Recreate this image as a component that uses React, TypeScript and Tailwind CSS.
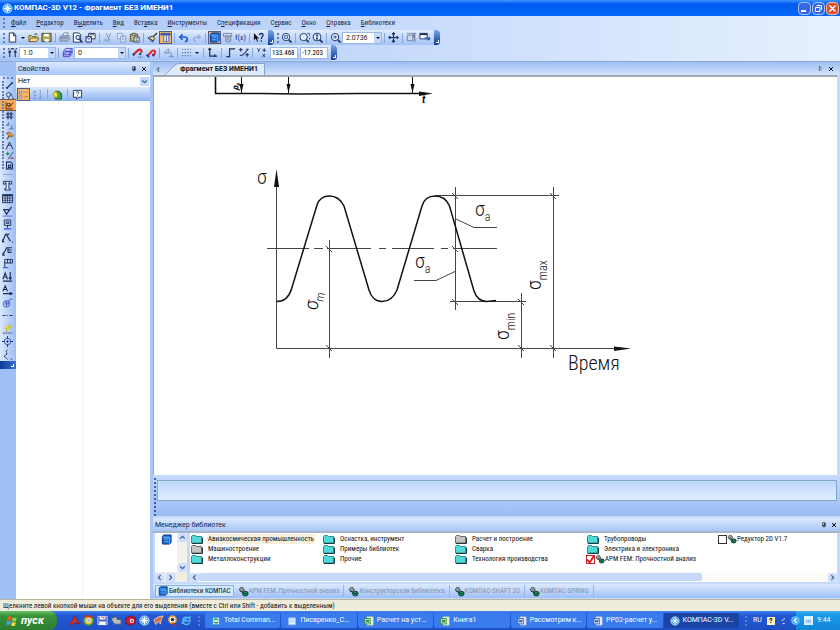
import type { ReactNode } from "react";

const INK = "#1c2f5c";

function Icon({ children, className = "size-[11px]" }: { children: ReactNode; className?: string }) {
  return (
    <svg viewBox="0 0 12 12" className={`shrink-0 ${className}`} fill="none" stroke={INK} strokeWidth="1">
      {children}
    </svg>
  );
}

const icons: Record<string, ReactNode> = {
  file: <path d="M2.500 1h5l2 2.500V11h-7zM7 1v3h2.500" fill="#fff" />,
  open: (
    <>
      <path d="M1 10V4h3l1 1h4v2" fill="#f3d25a" stroke="#6b5a1c" />
      <path d="M1 10.500l2.500-4H12l-2.500 4z" fill="#f7e08a" stroke="#6b5a1c" />
      <path d="M7 2.500c2-1 3 0 3.500 1" />
    </>
  ),
  save: (
    <>
      <path d="M1 1.500h10v9H1z" fill="#b9a75b" stroke="#3a3a2a" />
      <path d="M3.500 2h5v3h-5zM4 7.500h4.500v3H4z" fill="#fff" stroke="none" />
    </>
  ),
  print: (
    <>
      <path d="M1 5.500l2-1.500h8v4.500L9 10H1z" fill="#a9b4c9" stroke="#7485a5" />
      <path d="M4 4l1.500-3H10L9 4z" fill="#eef3fb" stroke="#7485a5" />
      <path d="M1.500 6.500h8" stroke="#66769a" />
    </>
  ),
  preview: (
    <>
      <path d="M1.500 1h6l2 2v8h-8z" fill="#fff" />
      <circle cx="6.500" cy="6" r="2.300" fill="#cfe2ff" />
      <path d="M8 8l3.500 3.500" strokeWidth="1.600" />
    </>
  ),
  send: (
    <>
      <path d="M4 1.500h7v6H4z" fill="#fff6d8" />
      <path d="M1 5h6v6H1z" fill="#d6e3f8" />
      <path d="M1.500 5l2.500 3 3-3M5 3h5" stroke="#3355a0" />
    </>
  ),
  cut: <path d="M3.500 1l3 7M8.500 1l-3 7M4.500 9a1.300 1.300 0 1 1-.5-1M8 10.500a1.300 1.300 0 1 1 0-2" stroke="#8093b5" />,
  copy: (
    <>
      <path d="M1.500 1.500H7v6H1.500z" fill="#dbe6f8" stroke="#8a9cc0" />
      <path d="M5 4.500h5.500V11H5zM6.500 6.500h2.500M6.500 8.500h2.500" fill="#dbe6f8" stroke="#8a9cc0" />
    </>
  ),
  paste: (
    <>
      <path d="M1.500 2.500h8V10h-8z" fill="#cbb56a" stroke="#55502c" />
      <path d="M3.500 1.500h4v2h-4z" fill="#ddd" stroke="#555" />
      <path d="M5.500 5.500H11V11H5.500zM7 7.500h2.500M7 9.500h2.500" fill="#fff" stroke="#33405c" />
    </>
  ),
  brush: (
    <>
      <path d="M11 1L7 5" stroke="#4a3a10" strokeWidth="1.500" />
      <path d="M1 6.500l5-2 2.500 2.500L6 11z" fill="#e3d894" />
      <path d="M3 7l3.500 2.500" />
    </>
  ),
  props: (
    <>
      <path d="M1 1.500h10v1.800H1z" fill="#3e6fd0" stroke="#2c519e" />
      <path d="M4 3.500h5.500v7H4z" fill="#dce6fa" stroke="#5573b5" />
      <path d="M7 4v6.500" stroke="#5573b5" />
    </>
  ),
  undo: <path d="M3 5.500h4.500c3.500 0 3.500 4.500 0 5M5 2.500L2 5.500l3 3" stroke="#1f5fd6" strokeWidth="1.800" />,
  redo: <path d="M9 5.500H5.500C2 5.500 2 9.500 5 10M7.500 3L10 5.500 7.500 8" stroke="#93aad6" strokeWidth="1.400" />,
  book: (
    <>
      <path d="M1.500 2.500l1.500-1.500h8v8.500L9.500 11h-8z" fill="#1767cf" stroke="#0a2f7a" />
      <path d="M2 3.500h7.500V11M3.500 5.500h4.500M3.500 8.500h4.500" stroke="#6fc1ff" />
    </>
  ),
  vars: (
    <>
      <path d="M1.500 1.500h9v3h-9z" fill="#d3dcec" stroke="#6f7fa0" />
      <path d="M4 4.500h5.500V10L7 11 4 9.500z" fill="#b4c0d6" stroke="#6f7fa0" />
      <path d="M6.500 5v4" stroke="#6f7fa0" />
    </>
  ),
  help: (
    <>
      <path d="M1 1v8l2-1.800L4.500 10.500l1-.5L4.300 7H6.500z" fill="#111" stroke="none" />
      <path d="M7 3.500C7 1 11 1 11 3.500 11 5.500 9 5.200 9 7.500M9 9v1.600" stroke="#10256b" strokeWidth="1.400" />
    </>
  ),
  zoomSel: (
    <>
      <circle cx="5.500" cy="5.500" r="4" fill="#e4efff" />
      <path d="M4 4h3v3H4z" stroke="#3355a0" />
      <path d="M8.500 8.500l3 3" strokeWidth="1.800" />
    </>
  ),
  zoomAll: (
    <>
      <circle cx="5" cy="5.500" r="4" fill="#e4efff" />
      <path d="M8 8.500l2.500 2.500" strokeWidth="1.700" />
      <path d="M9 1.500h2.500V4M11.500 6v2" stroke="#3355a0" />
    </>
  ),
  zoomFit: (
    <>
      <circle cx="5.500" cy="5.500" r="4.300" fill="#e4efff" />
      <path d="M5.500 2.500v6M4.200 3.500h2.600M4.200 7.500h2.600" />
      <path d="M8.500 8.500l3 3" strokeWidth="1.800" />
    </>
  ),
  zoomIn: (
    <>
      <circle cx="5.500" cy="5.500" r="4" fill="#e4efff" />
      <path d="M5.500 3.500v4M3.500 5.500h4" stroke="#2346a5" />
      <path d="M8.500 8.500l3 3" strokeWidth="1.800" />
    </>
  ),
  move: <path d="M6 1v10M1 6h10M4.500 2.500L6 1l1.500 1.500M4.500 9.500L6 11l1.500-1.500M2.500 4.500L1 6l1.500 1.500M9.500 4.500L11 6 9.500 7.500" strokeWidth="1.300" />,
  refresh: (
    <>
      <path d="M1 1.500h10M1.500 3.500h6v6h-6z" fill="#cfd9ea" stroke="#75849f" />
      <path d="M9.500 2v9M8 2v4" stroke="#56658a" />
    </>
  ),
  redraw: (
    <>
      <path d="M1 1.500h8v6H1z" fill="#fff" />
      <path d="M1 2.500h8" strokeWidth="1.800" />
      <path d="M6 8c1-2.500 4-2.500 5 0M11.500 5.500v2.800H9" stroke="#1f5fd6" strokeWidth="1.300" />
    </>
  ),
  step: <path d="M3 4v7M9 4v7M1.500 6L3 4l1.500 2M7.500 6L9 4l1.500 2M1 2h1.500M4 2h4M9.500 2H11" strokeWidth="1.200" />,
  layers: (
    <>
      <path d="M1 8.500L4 5h7L8 8.500z" fill="#9db5ff" stroke="#4b44c8" />
      <path d="M4 1.500h7V7L8 10.500H1.500V5z" stroke="#4b44c8" />
      <path d="M2.500 4.500h6v5.500M8.500 4.500L11 1.500" stroke="#4b44c8" />
    </>
  ),
  magnet: (
    <>
      <path d="M1.500 8.500l5-5c3-2.500 5 1 3 3" stroke="#d0231c" strokeWidth="2.200" />
      <path d="M1 9l1.500-1.500M8 8.500L9.500 7" stroke="#173a9a" strokeWidth="2.400" />
      <path d="M7 11h4.500" strokeDasharray="1 1" />
    </>
  ),
  magnetOff: (
    <>
      <path d="M3 9.500l4-4.500c3-3 5.500 0 3 3L8.500 9.500" stroke="#e02a20" strokeWidth="2.200" />
      <path d="M1.500 8.500l3 2.500M8 8l2 2" stroke="#173a9a" strokeWidth="1.700" />
    </>
  ),
  snap: <path d="M1.500 6.500L6 2l1 4.500zM6.500 10.500h5M9 6v4.500" stroke="#7385a8" />,
  grid: <path d="M1 2.500h10M1 6h10M1 9.500h10" stroke="#4f5f83" strokeDasharray="1.500 1.500" />,
  ortho: <path d="M3 1.500v8.500h8M1.500 3L3 1.500 4.500 3M8.500 8v3" strokeWidth="1.300" />,
  round: <path d="M1.500 10.500H5V2h6" strokeWidth="1.300" />,
  points: <path d="M1 3h4M3 1v4M5 9L10.500 3M2 9h3M8 8.500h4M10 6.500v4M9 2.500h2.500" strokeWidth="1.200" />,
  xy: <path d="M1.500 1.500L3 3.500l1.500-2M3 3.500v2M7 3.500h4M9 1.500v4M7 7.500l3 3.500M10 7.500L7 11" />,
  segment: <path d="M2 10l8-8M1.500 8.500l2 2M8.500 1.500l2 2" strokeWidth="1.500" />,
  shapes: (
    <>
      <circle cx="5" cy="5" r="3" />
      <path d="M4 11l4-7 3.500 7z" fill="#cfe0fb" />
    </>
  ),
  dims: (
    <>
      <path d="M1.500 1.500v9h9" stroke="#84310c" strokeWidth="1.500" />
      <path d="M3 3.500h4v3H3zM4 8l3-1 4-5" stroke="#332014" />
    </>
  ),
  mesh: <path d="M1 4h10M1 8h10M4 1v10M8 1v10" strokeWidth="1.600" />,
  angle: <path d="M2 6l3-4v4zM5 10.500h6M9 5v5.500" stroke="#4c5f8c" />,
  hammer: (
    <>
      <path d="M2 3l4-1.500 5 4.500-2 2-3.500-2z" fill="#e8a13a" stroke="#6d4213" />
      <path d="M6 6.500L2.500 11" stroke="#6d4213" strokeWidth="1.600" />
    </>
  ),
  measure: (
    <>
      <path d="M1.500 11L6 1.500l4.500 9.500M3.500 7C5 5 7 5 8.500 7" strokeWidth="1.300" />
      <path d="M1 10.500h2" stroke="#c33" />
    </>
  ),
  plusMinus: (
    <>
      <path d="M1 3.500h5M3.500 1v5" stroke="#17994a" strokeWidth="1.600" />
      <path d="M11 1L4 11" />
      <path d="M7 9.500h4.500" stroke="#c8281e" strokeWidth="1.600" />
    </>
  ),
  sheet: <path d="M2 1.500h5.500L10 4v6.500H2zM4.500 5.500h3.500v3H4.500z" fill="#d9e2f2" strokeWidth="1.400" />,
  text: <path d="M1.500 4.500v-3h9v3h-2V3H7.500v6.500H9V11H3V9.500h1.500V3H3.500v1.500z" fill="#e9f0fc" />,
  table: (
    <>
      <path d="M.5 2h11v8.500H.5z" fill="#c9d3e6" />
      <path d="M.5 2.500h11" strokeWidth="2" />
      <path d="M.5 5.500h11M.5 8h11M3.500 3v7M6 3v7M8.500 3v7" strokeWidth=".8" />
    </>
  ),
  rough: (
    <>
      <path d="M2 4h6L5 9zM5 9l5.500-8" strokeWidth="1.300" />
      <path d="M1 11h10" stroke="#4068f0" />
    </>
  ),
  base: (
    <>
      <path d="M2.500 1h7v6h-7zM6 7v3M4.500 3h3v2h-3z" />
      <path d="M2 10.800h8" stroke="#4068f0" strokeWidth="1.600" />
    </>
  ),
  leader: <path d="M.5 10.500L4 2.500h4M5 3l4 7M.5 8v2.500h2M11 11h1" strokeWidth="1.300" />,
  mark: <path d="M1 11L5 3h6M6.500 5.500h4M6.500 8h4M6.500 3v5M1 8.500V11h2" strokeWidth="1.200" />,
  tolerance: (
    <>
      <path d="M3 1.500h8.500v4H3zM6 1.500v4M9 1.500v4M3 5v5" />
      <path d="M1 10.500h6" stroke="#4068f0" strokeWidth="1.500" />
    </>
  ),
  section: <path d="M1 9L3.500 2 6 9M2 6.500h3M9 1v8M7.500 7L9 9l1.500-2M1 11h10" strokeWidth="1.200" />,
  view: <path d="M1 8l2.500-6L6 8M2 6h3M1 10.500h9M8.500 9l2.500 1.500L8.500 12" strokeWidth="1.200" />,
  detail: (
    <>
      <circle cx="5" cy="7.500" r="3.500" stroke="#3a50c8" />
      <path d="M3 7.500h4.500v-3C7.500 3 9 2 11 2.500M5 5.500V10M3 5.500h3" stroke="#3a50c8" />
    </>
  ),
  axis: <path d="M.5 6h3.500M5.500 6h1M8 6h3.500" />,
  bolt: (
    <>
      <path d="M9 .5L3 6h3l-2 4 6-5.500H7z" fill="#ffe82a" stroke="#c5a200" strokeWidth=".6" />
      <path d="M1 11h10" strokeDasharray="2 1" />
    </>
  ),
  target: (
    <>
      <circle cx="6" cy="6" r="3.500" stroke="#3a50c8" />
      <path d="M6 0v3M6 9v3M0 6h3M9 6h3" />
      <circle cx="6" cy="6" r=".8" fill={INK} />
    </>
  ),
  wave: <path d="M6 1C2 3 8 5 4 6.500S6 10 6 11.500M9.500 11h1.500" />,
  categories: (
    <>
      <path d="M1.500 2.500h2.500v2.500H1.500zM1.500 7.500h2.500V10H1.500z" fill="#fff" stroke="#5f7ec4" />
      <path d="M6 3.500h5M6 8.500h5" stroke="#c98636" />
    </>
  ),
  sort: <path d="M1.500 5L3 1.500 4.500 5M1.500 7h3l-3 3.500h3M9 1v9.500M7.500 9L9 10.500 10.500 9" stroke="#8295b9" />,
  filter: (
    <>
      <path d="M3.500 2.500h4L10.500 5v6h-7z" fill="#3fa34d" stroke="#1c5c2a" />
      <path d="M1 6l3.500-4 2 5-2 3z" fill="#f2e92c" stroke="#9a951a" />
    </>
  ),
  ask: <path d="M1.500 1.500h9v7.500H7l-2 2V9H1.500zM4.500 4c0-1.500 3-1.500 3 0 0 1-1.500 1-1.500 2M6 7v1" fill="#fff" />,
  gears: (
    <>
      <circle cx="4" cy="4" r="2.500" fill="#8f9a98" stroke="#222" strokeDasharray="1.500 .7" />
      <ellipse cx="8" cy="8.300" rx="3" ry="2.500" fill="#159567" stroke="#0b2d22" />
      <path d="M3 5l3 3M6.500 8.300h3" stroke="#0b2d22" />
    </>
  ),
  pin: <path d="M3.500 1.500h5v6h-5zM7 2v5M2 7.500h8M6 8v3" stroke="#111" strokeWidth="1.300" />,
  close: <path d="M2 2l8 8M10 2l-8 8" stroke="#111" strokeWidth="2" />,
  left: <path d="M8 2L4 6l4 4z" />,
  right: <path d="M4 2l4 4-4 4z" />,
  logo: (
    <>
      <circle cx="6" cy="6" r="5" fill="#4fa4ee" stroke="#bfe2ff" />
      <path d="M3.500 3.500l5 5M8.500 3.500l-5 5M6 2v8M2 6h8" stroke="#fff" strokeWidth="1.100" />
    </>
  ),
  red: <path d="M6 1l2 4 3.500 5-3-1L6 8 3 10.500.500 9.500 4 6z" fill="#e33327" stroke="#8e1410" />,
  chrome: (
    <>
      <circle cx="6" cy="6" r="5" fill="#e7b72c" stroke="#4b9a35" strokeWidth="1.500" />
      <path d="M2 2.500C4 .5 8 .5 10 3" stroke="#d93525" strokeWidth="2" />
      <circle cx="6" cy="6" r="2" fill="#6db2ef" stroke="#fff" />
    </>
  ),
  floppy: (
    <>
      <path d="M1 1.500h10v9H1z" fill="#4f64bd" stroke="#c7d6fb" />
      <path d="M3 2h6v3H3zM2.500 7h7v3.500h-7z" fill="#fff" stroke="none" />
      <path d="M5 3h3" stroke="#d22" />
    </>
  ),
  drive: <path d="M1 3l5-1 1 3h4v5H4L1 6z" fill="#b8bec6" stroke="#51585f" />,
  cube: (
    <>
      <path d="M1 3l5-2 5 2v6l-5 2.500L1 9z" fill="#c8203a" stroke="#7b0c1c" />
      <path d="M6 5h3v3H6z" stroke="#fff" />
    </>
  ),
  horse: <path d="M1 5l5-3 5-1-2 4-1 5-2-3-3 3.500z" fill="#cf7154" stroke="#eec3a6" />,
  round2: (
    <>
      <circle cx="6" cy="5" r="4" fill="#fff" stroke="#e2a221" strokeWidth="1.600" />
      <circle cx="6" cy="5" r="1.500" fill="#111" />
      <path d="M6 9l4 2" stroke="#d02d20" strokeWidth="2" />
    </>
  ),
  ie: <path d="M2.500 6.500h7.500C10 1 2 1 2 6.500c0 4.500 6 5 7.500 1.800M1 10C2 6 7 2 11 2" stroke="#56b7f4" strokeWidth="1.500" />,
  word: (
    <>
      <path d="M3.500 1h7.500v10H3.500z" fill="#fff" stroke="#8fa9de" />
      <path d="M1 3h7v6.500H1z" fill="#dbe6ff" stroke="#2b56b3" />
      <path d="M2.500 4.500l1 3 1-2.500 1 2.500 1-3" stroke="#1c3f94" />
    </>
  ),
  excel: (
    <>
      <path d="M3.500 1h7.500v10H3.500z" fill="#fff" stroke="#9bc79b" />
      <path d="M1 3h7v6.500H1z" fill="#e2f7dc" stroke="#2c8a36" />
      <path d="M2.500 4.500l4 3.500M6.500 4.500l-4 3.500" stroke="#1d7a28" strokeWidth="1.300" />
    </>
  ),
  commander: (
    <>
      <path d="M2 1.500h8v9H2z" fill="#d9f4ff" stroke="#2d86c9" />
      <path d="M4 5c0-2 3-2 4 0M8 7c0 2-3 2-4 0" stroke="#188a3c" strokeWidth="1.500" />
    </>
  ),
  notes: <path d="M2 2.500h8v8H2zM3.500 5h5M3.500 7h5M3.500 1v2M6 1v2M8.500 1v2" fill="#e7f3ff" stroke="#9fc6ef" />,
};

function Tool({ name, on = false, label }: { name: string; on?: boolean; label?: string }) {
  return (
    <button
      aria-label={label ?? name}
      className={
        on
          ? "flex h-[13px] w-[13px] shrink-0 items-center justify-center border border-[#4b5b8f] bg-[#f7b568]"
          : "flex h-[13px] w-[13px] shrink-0 items-center justify-center hover:bg-[#ffe6b5]"
      }
    >
      <Icon>{icons[name]}</Icon>
    </button>
  );
}

function Sep() {
  return <span className="mx-[2px] h-[10px] w-px shrink-0 bg-[#86a9e0]" />;
}

function Grip() {
  return <span className="mr-px ml-[3px] h-[10px] w-0 shrink-0 border-l-2 border-dotted border-[#5c7fc4]" />;
}

function Down() {
  return <span className="mx-[2px] h-0 w-0 shrink-0 border-x-2 border-t-2 border-x-transparent border-t-[#111]" />;
}

function Cap() {
  return (
    <span className="ml-[3px] flex h-[15px] w-[6px] shrink-0 items-end justify-center rounded-r-sm bg-linear-to-b from-[#7ba4ea] to-[#0b3a97] pb-[2px]">
      <span className="h-[3px] w-[3px] border-r border-b border-white" />
    </span>
  );
}

function Combo({ value, label, width }: { value: string; label: string; width: string }) {
  return (
    <span className={`flex h-[12px] shrink-0 items-center border border-[#9db9e8] bg-white ${width}`}>
      <select aria-label={label} className="h-full min-w-0 flex-1 appearance-none bg-white pl-[3px] font-['Roboto'] text-[7px] leading-[10px] text-[#222]">
        <option>{value}</option>
      </select>
      <span className="flex h-full w-[7px] items-center justify-center bg-[#c3d8f8]">
        <Down />
      </span>
    </span>
  );
}

const menu: [string, string, string][] = [
  ["", "Ф", "айл"],
  ["", "Р", "едактор"],
  ["В", "ы", "делить"],
  ["", "В", "ид"],
  ["Вст", "а", "вка"],
  ["", "И", "нструменты"],
  ["С", "п", "ецификация"],
  ["С", "е", "рвис"],
  ["", "О", "кно"],
  ["", "С", "правка"],
  ["", "Б", "иблиотеки"],
];

function TitleBar() {
  return (
    <header className="flex h-4 items-center bg-linear-to-b from-[#3f95ff] via-[#0058ee] via-25% to-[#0567fb] pr-px pl-[2px]">
      <Icon>{icons.logo}</Icon>
      <h1 className="flex-1 truncate font-['Roboto'] text-[8px] leading-[12px] font-bold text-white">
        <span className="ml-px">КОМПАС-3D V12 - Фрагмент БЕЗ ИМЕНИ1</span>
      </h1>
      <div className="flex gap-px">
        <button aria-label="Свернуть" className="flex h-[13px] w-[13px] items-end rounded-sm border border-[#a9c5ff] bg-[#3568e0] p-[2px]">
          <span className="h-[2px] w-[5px] bg-white" />
        </button>
        <button aria-label="Восстановить" className="flex h-[13px] w-[13px] items-center justify-center rounded-sm border border-[#a9c5ff] bg-[#3568e0]">
          <svg viewBox="0 0 9 9" className="size-[9px]" fill="none" stroke="#fff">
            <path d="M3 2.500v-1h4.500v4h-1M1.500 3.500H6v4H1.500z" />
          </svg>
        </button>
        <button aria-label="Закрыть" className="flex h-[13px] w-[13px] items-center justify-center rounded-sm border border-[#f5b9a5] bg-[#de4f2b]">
          <svg viewBox="0 0 9 9" className="size-[9px]" stroke="#fff" strokeWidth="1.500">
            <path d="M1.500 1.500l6 6M7.500 1.500l-6 6" />
          </svg>
        </button>
      </div>
    </header>
  );
}

function Toolbars() {
  const bar = "flex h-[15px] items-center bg-linear-to-b from-[#e2edfe] to-[#a3c2f5]";
  return (
    <div className="bg-linear-to-r from-[#a9c6f7] via-[#cfe0fc] via-60% to-[#e6f1fe]">
      <nav className="flex h-[14px] items-center">
        <Grip />
        {menu.map(([a, key, b]) => (
          <button key={key + b} className="px-[5px] text-[7px] leading-[12px] text-[#1a2748]">
            {a}
            <u>{key}</u>
            {b}
          </button>
        ))}
      </nav>
      <div className="flex">
        <div className={bar}>
          <Grip />
          <Tool name="file" />
          <Down />
          <Tool name="open" />
          <Tool name="save" />
          <Sep />
          <Tool name="print" />
          <Tool name="preview" />
          <Tool name="send" />
          <Sep />
          <Tool name="cut" />
          <Tool name="copy" />
          <Tool name="paste" />
          <Sep />
          <Tool name="brush" />
          <Tool name="props" on />
          <Sep />
          <Tool name="undo" />
          <Tool name="redo" />
          <Sep />
          <Tool name="book" on />
          <Tool name="vars" />
          <button className="w-[13px] text-center text-[8px] leading-[12px] text-[#1b2f8a]">f(x)</button>
          <Sep />
          <Tool name="help" />
          <Cap />
        </div>
        <div className={bar}>
          <Grip />
          <Tool name="zoomSel" />
          <Sep />
          <Tool name="zoomAll" />
          <Tool name="zoomFit" />
          <Sep />
          <Tool name="zoomIn" />
          <Combo value="2.0736" label="Масштаб" width="w-[40px]" />
          <Sep />
          <Tool name="move" />
          <Sep />
          <Tool name="refresh" />
          <Tool name="redraw" />
          <Cap />
        </div>
      </div>
      <div className="flex pb-px">
        <div className={bar}>
          <Grip />
          <Tool name="step" />
          <Combo value="1.0" label="Шаг курсора" width="w-[37px]" />
          <Sep />
          <Tool name="layers" />
          <Combo value="0" label="Слой" width="w-[52px]" />
          <Sep />
          <Tool name="magnet" />
          <Tool name="magnetOff" />
          <Sep />
          <Tool name="snap" />
          <Sep />
          <Tool name="grid" />
          <Down />
          <Sep />
          <Tool name="ortho" />
          <Sep />
          <Tool name="round" />
          <Tool name="points" />
          <Sep />
          <Tool name="xy" />
          <input aria-label="X" defaultValue="133.468" className="ml-[2px] h-[12px] w-[28px] border border-[#9db9e8] bg-white px-px text-[7px]" />
          <input aria-label="Y" defaultValue="-17.203" className="ml-[2px] h-[12px] w-[28px] border border-[#9db9e8] bg-white px-px text-[7px]" />
          <Cap />
        </div>
      </div>
    </div>
  );
}

const modes = ["segment", "shapes", "dims", "mesh", "angle", "hammer", "measure", "plusMinus", "sheet"];
const marks = ["text", "table", "rough", "base", "leader", "mark", "tolerance", "section", "view", "detail", "axis", "bolt", "target", "wave"];

function CompactPanel() {
  return (
    <aside className="w-4 shrink-0 bg-[#9fbff5] pt-[14px]">
      <div className="flex flex-col bg-linear-to-r from-[#dbe8fd] to-[#9dbdf3]">
        <span className="mx-[3px] mt-px mb-px border-t-2 border-dotted border-[#5c7fc4]" />
        {modes.map((name) => (
          <button
            key={name}
            aria-label={name}
            className={name === "dims" ? "flex h-[10px] items-center bg-[#f5ad57] outline outline-[#6e5a48]" : "flex h-[10px] items-center"}
          >
            <span className="mr-px ml-[2px] h-2 w-0 border-l-2 border-dotted border-[#5c7fc4]" />
            <Icon className="size-[9px]">{icons[name]}</Icon>
          </button>
        ))}
        <span className="mx-[3px] my-[4px] h-px bg-[#86a9e0]" />
        {marks.map((name) => (
          <button key={name} aria-label={name} className="flex h-[13px] items-center pl-[2px]">
            <Icon>{icons[name]}</Icon>
          </button>
        ))}
        <span className="flex h-[8px] items-center justify-end bg-linear-to-r from-[#0b3a97] to-[#3e72cf] pr-[2px]">
          <span className="h-[3px] w-[3px] border-r border-b border-white" />
        </span>
      </div>
    </aside>
  );
}

function PanelHeader({ title }: { title: string }) {
  return (
    <div className="flex h-[13px] shrink-0 items-center gap-[4px] bg-linear-to-b from-[#dce9fe] to-[#a8c6f6] pr-[3px] pl-[2px]">
      <h2 className="flex-1 font-['Roboto'] text-[7px] leading-[12px] text-[#14224a]">{title}</h2>
      <button aria-label="Закрепить">
        <Icon className="size-[6px]">{icons.pin}</Icon>
      </button>
      <button aria-label="Закрыть панель">
        <Icon className="size-[6px]">{icons.close}</Icon>
      </button>
    </div>
  );
}

function Properties() {
  return (
    <section className="flex w-[134px] shrink-0 flex-col bg-white">
      <PanelHeader title="Свойства" />
      <div className="flex h-[12px] items-center">
        <select aria-label="Объект" className="h-full flex-1 appearance-none pl-[2px] font-['Roboto'] text-[7px] leading-[12px] text-black">
          <option>Нет</option>
        </select>
        <span className="mr-px flex size-[9px] items-center justify-center bg-[#c6d8fc]">
          <Icon className="size-[7px]">
            <path d="M2 4l4 4 4-4" stroke="#3d5a96" strokeWidth="2" />
          </Icon>
        </span>
      </div>
      <div className="flex h-[14px] items-center gap-px bg-linear-to-b from-[#dde9fd] to-[#8fb4f1] pl-px">
        <Tool name="categories" on />
        <Tool name="sort" />
        <Sep />
        <Tool name="filter" />
        <Sep />
        <Tool name="ask" />
      </div>
      <div className="flex flex-1">
        <div className="w-1/2 border-r border-[#f6f5f0]" />
      </div>
    </section>
  );
}

function Tick({ x, y }: { x: number; y: number }) {
  return <path d={`M${x - 3} ${y - 3}l6 6`} />;
}

function Drawing() {
  return (
    <svg viewBox="154 77 682 398" className="block h-[398px] w-[682px]" fill="none" stroke="#444" strokeWidth="1">
      <g stroke="#111">
        <path d="M215.500 76v18M215 93.500h45l40 .5 60-.5h62" strokeWidth="1.600" />
        <path d="M241.500 76v17M288.500 76v17M412.500 76v17" />
        <path d="M239.500 84l2 9 2-9zM286.500 84l2 9 2-9zM410.500 84l2 9 2-9zM419 91.500l14 2-14 2.500z" fill="#111" stroke="none" />
      </g>
      <path d="M276.500 175v173.500H618M329.500 240v118M455.500 187v123M553.500 187v171M521.500 293v65M435 195.500h124M450 301.500h76" />
      <path d="M267 248.500h42M314 248.500h9M327 248.500h44M379 248.500h7M392 248.500h42M441 248.500h7M453 248.500h44" />
      <path d="M455 218.500l19 9h23M414 280.500h22l19-9" />
      <path d="M276.500 169l-2.500 18h5zM631 348.500l-17-2v4.500z" fill="#111" stroke="none" />
      <path
        d="M277 301.500C284 301.500 289 297 291.500 289L317 205C319 199 324 196 329.500 196C337 196 341 200 344 206L369 290C371 297 376 301.500 382 301.500C389 301.500 394 297 397 290L422 206C424 199 429 196 435 196C442 196 447 200 449.500 206L474 291C476 297 480 301.500 487 301.500L496 300.500"
        stroke="#111"
        strokeWidth="1.500"
      />
      <Tick x={329} y={249} />
      <Tick x={329} y={348} />
      <Tick x={455} y={196} />
      <Tick x={455} y={249} />
      <Tick x={455} y={302} />
      <Tick x={553} y={196} />
      <Tick x={553} y={348} />
      <Tick x={521} y={302} />
      <Tick x={521} y={348} />
      <g fill="#111" stroke="none" className="font-['Roboto_Condensed','Roboto',sans-serif] font-light">
        <text x="257" y="184" fontSize="20">σ</text>
        <text x="475" y="216" fontSize="20">σ<tspan fontSize="12" dy="5">a</tspan></text>
        <text x="415" y="268" fontSize="20">σ<tspan fontSize="12" dy="5">a</tspan></text>
        <text transform="translate(317 311) rotate(-78)" fontSize="20">σ<tspan fontSize="12" dy="4">m</tspan></text>
        <text transform="translate(509 340) rotate(-90)" fontSize="20">σ<tspan fontSize="12" dy="6">min</tspan></text>
        <text transform="translate(541 290) rotate(-90)" fontSize="20">σ<tspan fontSize="12" dy="6">max</tspan></text>
        <text x="568" y="370" fontSize="20">Время</text>
        <text x="422" y="103" fontSize="11" fontStyle="italic" fontWeight="bold">t</text>
        <text transform="translate(238 90) rotate(-80)" fontSize="9" fontStyle="italic" fontWeight="bold">
          p<tspan fontSize="6" dy="1">a</tspan>
        </text>
      </g>
    </svg>
  );
}

function Folder({ gray = false }: { gray?: boolean }) {
  return (
    <svg viewBox="0 0 12 9" className="h-[9px] w-[12px] shrink-0" fill={gray ? "#c4c4c4" : "#4fdcd8"} stroke={gray ? "#6b6b6b" : "#2b8d93"}>
      <path d="M.5 1.500l1-1h3l1 1h5v6.500H.5z" />
      <path d="M1 8.500h10.500V2.500" fill="none" stroke="#1d3b3d" />
    </svg>
  );
}

type Entry = { title: string; kind?: "gray" | "app"; checked?: boolean; active?: boolean };

const columns: Entry[][] = [
  [{ title: "Авиакосмическая промышленность", active: true }, { title: "Машиностроение", kind: "gray" }, { title: "Металлоконструкции" }],
  [{ title: "Оснастка, инструмент" }, { title: "Примеры библиотек" }, { title: "Прочие" }],
  [{ title: "Расчет и построение", kind: "gray" }, { title: "Сварка" }, { title: "Технология производства" }],
  [{ title: "Трубопроводы" }, { title: "Электрика и электроника" }, { title: "APM FEM: Прочностной анализ", kind: "app", checked: true }],
  [{ title: "Редуктор 2D V1.7", kind: "app" }],
];

function LibraryItem({ item }: { item: Entry }) {
  if (item.kind === "app") {
    return (
      <label className="-ml-px flex h-[10px] items-center whitespace-nowrap">
        <input
          type="checkbox"
          defaultChecked={item.checked}
          className="peer size-[9px] shrink-0 appearance-none border border-[#333] bg-white checked:border-[#c22]"
        />
        <svg viewBox="0 0 9 9" className="-ml-[9px] hidden size-[9px] shrink-0 peer-checked:block" fill="none" stroke="#d01818" strokeWidth="1.800">
          <path d="M1 4.500l2.500 3L8 1" />
        </svg>
        <Icon className="size-[10px]">{icons.gears}</Icon>
        {item.title}
      </label>
    );
  }
  return (
    <button className="flex h-[10px] items-center gap-[4px] whitespace-nowrap">
      <Folder gray={item.kind === "gray"} />
      <span className={item.active ? "bg-[#f6f0dc] px-px" : "px-px"}>{item.title}</span>
    </button>
  );
}

function Arrow({ d, label }: { d: string; label: string }) {
  return (
    <button aria-label={label} className="flex size-[9px] shrink-0 items-center justify-center rounded-[2px] bg-[#cfdefd]">
      <Icon className="size-[7px]">
        <path d={d} stroke="#3d5a96" strokeWidth="2" />
      </Icon>
    </button>
  );
}

const tabs = ["APM FEM: Прочностной анализ", "Конструкторская библиотека", "КОМПАС-SHAFT 2D", "КОМПАС-SPRING"];

function LibraryManager() {
  return (
    <section className="flex shrink-0 flex-col bg-[#c5d9fa] pb-px">
      <PanelHeader title="Менеджер библиотек" />
      <div className="flex h-[53px] gap-[3px] border-t-2 border-[#a8b6cc] pr-[3px] pb-[2px] pl-[2px] text-[7px] leading-[10px] text-[#111]">
        <div className="flex w-[32px] shrink-0 flex-col bg-white">
          <div className="flex flex-1">
            <div className="flex flex-1 justify-center pt-px">
              <Icon>{icons.book}</Icon>
            </div>
            <div className="flex w-[10px] flex-col items-center justify-between bg-[#f3f2ea]">
              <Arrow d="M2 8l4-4 4 4" label="Вверх" />
              <Arrow d="M2 4l4 4 4-4" label="Вниз" />
            </div>
          </div>
          <div className="flex h-[10px] items-center gap-[2px] bg-[#f0eee2]">
            <Arrow d="M8 2L4 6l4 4" label="Влево" />
            <Arrow d="M4 2l4 4-4 4" label="Вправо" />
          </div>
        </div>
        <div className="flex min-w-0 flex-1 flex-col bg-white">
          <div className="flex min-h-0 flex-1 pt-px pl-px">
            {columns.map((column) => (
              <div key={column[0].title} className="w-[132px] shrink-0">
                {column.map((item) => (
                  <LibraryItem key={item.title} item={item} />
                ))}
              </div>
            ))}
          </div>
          <div className="flex h-[10px] items-center bg-[#fbfbf7]">
            <Arrow d="M8 2L4 6l4 4" label="Назад" />
            <div className="flex-1">
              <div className="h-[8px] w-4/5 rounded-[2px] bg-[#c7d8fc]" />
            </div>
            <Arrow d="M4 2l4 4-4 4" label="Вперёд" />
          </div>
        </div>
      </div>
      <div className="flex h-[14px] items-center bg-linear-to-b from-[#dce9fe] to-[#9fc0f5] pl-[2px] text-[7px] leading-[12px]">
        <button className="flex h-[12px] items-center gap-px border border-[#8eb1ea] bg-[#cfeafd] px-[2px] text-[#111]">
          <Icon className="size-[10px]">{icons.book}</Icon>
          Библиотеки КОМПАС
        </button>
        {tabs.map((tab) => (
          <button key={tab} className="flex items-center border-r border-[#9bb4dc] px-[4px] text-[#8595b0]">
            <Icon>{icons.gears}</Icon>
            {tab}
          </button>
        ))}
      </div>
    </section>
  );
}

function Workspace() {
  return (
    <main className="flex min-w-0 flex-1 flex-col bg-[#c5d9fa]">
      <div className="flex h-[13px] shrink-0 items-end bg-linear-to-b from-[#9dbdf2] to-[#d5e4fc] pr-[6px]">
        <button aria-label="Предыдущая вкладка" className="mb-[2px] ml-px">
          <Icon className="size-[7px]">{icons.left}</Icon>
        </button>
        <div className="flex flex-1">
          <svg viewBox="0 0 16 12" className="ml-[3px] h-[12px] w-[16px]" fill="#dfeafd" stroke="#86a5d8">
            <path d="M0 12.500L10 3Q12 .5 16 .5V12.500" stroke="none" />
            <path d="M0 12.500L10 3Q12 .5 16 .5" fill="none" />
          </svg>
          <button className="h-[12px] border-t border-r border-[#86a5d8] bg-[#dfeafd] pr-[6px] font-['Roboto'] text-[7px] leading-[11px] font-bold text-[#111]">
            Фрагмент БЕЗ ИМЕНИ1
          </button>
        </div>
        <div className="mb-[3px] flex gap-[4px]">
          <button aria-label="Следующая вкладка">
            <Icon className="size-[7px]">{icons.right}</Icon>
          </button>
          <button aria-label="Закрыть документ">
            <Icon className="size-[6px]">{icons.close}</Icon>
          </button>
        </div>
      </div>
      <div className="mr-[3px] flex-1 overflow-hidden border-t-2 border-l border-[#a3a8b0] bg-white">
        <Drawing />
      </div>
      <div className="mt-[3px] mb-[2px] flex h-[38px] shrink-0 bg-linear-to-b from-[#c3d7fa] to-[#9bbcf3] pr-[3px]">
        <span className="mx-px w-0 border-l-2 border-dotted border-[#3c5ea8]" />
        <div className="mt-[2px] h-[21px] flex-1 border border-[#7fa9c4] bg-linear-to-b from-[#bfd7fc] to-[#dfecff]" />
      </div>
      <LibraryManager />
    </main>
  );
}

const tasks = [
  { title: "Total Comman...", icon: "commander" },
  { title: "Писаренко_С...", icon: "notes" },
  { title: "Расчет на уст...", icon: "excel" },
  { title: "Книга1", icon: "excel" },
  { title: "Рассмотрим к...", icon: "word" },
  { title: "РР02-расчет у...", icon: "word" },
  { title: "КОМПАС-3D V...", icon: "logo" },
];
const quick = ["red", "chrome", "floppy", "drive", "cube", "logo", "horse", "round2", "ie"];

function Taskbar() {
  return (
    <footer className="flex h-[19px] shrink-0 items-center bg-linear-to-b from-[#3f87f5] via-[#2459d6] via-20% to-[#1f4fc4] font-['Roboto'] text-[7px] text-white">
      <button className="flex h-full w-[57px] items-center gap-[3px] rounded-r-lg bg-linear-to-b from-[#6cc06a] via-[#37933a] via-25% to-[#2d7f30] pl-[6px]">
        <svg viewBox="0 0 12 12" className="size-[12px]">
          <path d="M1.500 2q2-1.500 4 0L5 5.500q-2-1-4 0z" fill="#ee5a2b" />
          <path d="M6.500 2.500q2 1 4-.2L10 6q-2 1-4 0z" fill="#8ed14b" />
          <path d="M.8 6.500q2-1.200 4 0L4.300 10q-2-1.200-4 0z" fill="#4f9cf5" />
          <path d="M5.800 7q2 1 4 0L9.200 10.500q-2 1-4 0z" fill="#fbd23a" />
        </svg>
        <span className="text-[11px] leading-[16px] font-bold italic">пуск</span>
      </button>
      <div className="flex w-[148px] shrink-0 items-center gap-[3px] pl-[12px]">
        {quick.map((name) => (
          <button key={name} aria-label={name}>
            <Icon>{icons[name]}</Icon>
          </button>
        ))}
        <Grip />
      </div>
      <div className="flex min-w-0 flex-1 gap-px">
        {tasks.map((task) => (
          <button
            key={task.title}
            className={
              task.icon === "logo"
                ? "flex h-[15px] min-w-0 flex-1 items-center gap-[3px] rounded-[2px] bg-[#1b43a4] pl-[6px] whitespace-nowrap"
                : "flex h-[15px] min-w-0 flex-1 items-center gap-[3px] rounded-[2px] bg-[#3a7bee] pl-[6px] whitespace-nowrap"
            }
          >
            <Icon className="size-[10px]">{icons[task.icon]}</Icon>
            {task.title}
          </button>
        ))}
      </div>
      <div className="flex w-[57px] shrink-0 items-center gap-[5px] pl-[3px]">
        <Grip />
        <span>RU</span>
        <button aria-label="Справка" className="flex size-[8px] items-center justify-center bg-[#fff3b8] text-[7px] leading-[8px] font-bold text-black">
          ?
        </button>
        <Icon className="size-[8px]">
          <path d="M3 6c0-2 4-2 4-4M4 10h3" stroke="#fff" strokeWidth="1.500" />
        </Icon>
      </div>
      <div className="flex h-full w-[44px] shrink-0 items-center gap-[4px] bg-linear-to-b from-[#3fb0f8] via-[#169bea] via-20% to-[#1286d8]">
        <button aria-label="Показать значки" className="-ml-[5px] flex size-[9px] items-center justify-center rounded-full bg-[#56b4f8]">
          <Icon className="size-[7px]">
            <path d="M8 2L4 6l4 4" stroke="#fff" strokeWidth="2" />
          </Icon>
        </button>
        <span className="h-[9px] w-[9px] bg-[#d8f0ff] text-center text-[6px] leading-[9px] text-[#3b8acb]">m</span>
        <time>9:44</time>
      </div>
    </footer>
  );
}

export default function App() {
  return (
    <div className="flex min-h-screen flex-col bg-[#9fbff5] font-['Roboto_Condensed','Roboto',sans-serif]">
      <TitleBar />
      <Toolbars />
      <div className="flex flex-1 border-t border-[#8aa8d8]">
        <CompactPanel />
        <Properties />
        <div className="w-[3px] shrink-0 bg-[#a9c6f7]" />
        <Workspace />
      </div>
      <p className="h-[12px] shrink-0 border-t border-[#b8b49f] bg-[#efecdc] pl-[3px] text-[7px] leading-[12px] text-[#111]">
        Щелкните левой кнопкой мыши на объекте для его выделения (вместе с Ctrl или Shift - добавить к выделенным)
      </p>
      <Taskbar />
    </div>
  );
}
